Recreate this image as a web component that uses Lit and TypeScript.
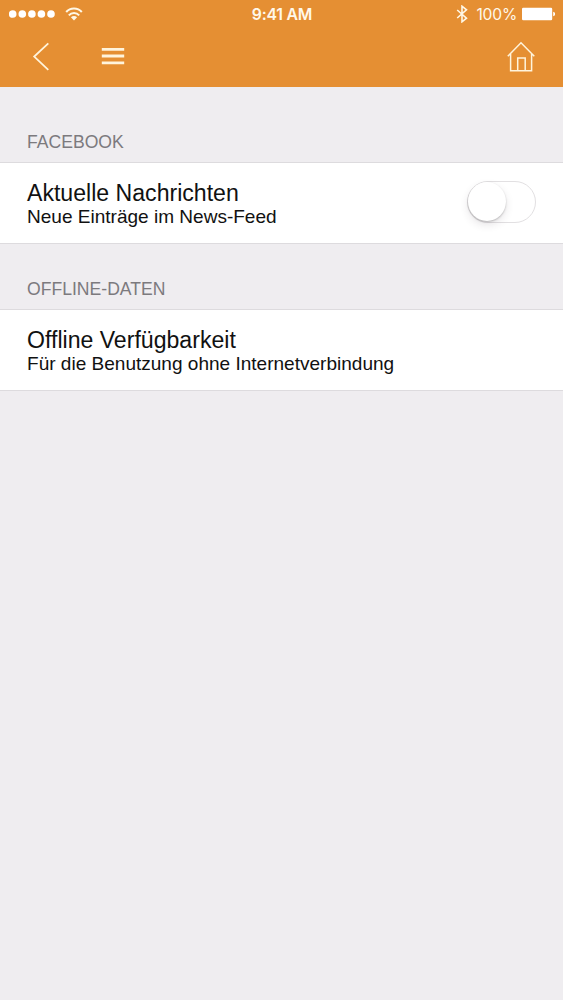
import { LitElement, html, css } from "lit";
import { customElement, property } from "lit/decorators.js";

@customElement("status-bar")
class StatusBar extends LitElement {
  static styles = css`
    :host { display: grid; grid-template-columns: 1fr auto 1fr; align-items: center; height: 28px; padding: 0 8px 0 9px; color: #fff8ea; }
    .side { display: flex; align-items: center; }
    .signal { display: block; margin-right: 10px; }
    .right { justify-content: flex-end; }
    .time { font: 600 15.8px/28px Inter, sans-serif; letter-spacing: -0.22px; padding-top: 1px; }
    .percent { font: 400 15.6px/28px Inter, sans-serif; letter-spacing: -0.2px; margin: 0 4px 0 8px; padding-top: 1px; }
    svg { display: block; flex: none; margin-bottom: 2px; }
  `;
  render() {
    return html`
      <div class="side">
        <svg class="signal" width="46" height="10" viewBox="0 0 46 10" fill="#fff">
          <circle cx="3.7" cy="5" r="3.8"/><circle cx="13.3" cy="5" r="3.8"/><circle cx="22.9" cy="5" r="3.8"/><circle cx="32.4" cy="5" r="3.8"/><circle cx="42" cy="5" r="3.8"/>
        </svg>
        <svg width="18" height="14" viewBox="0 0 18 14" fill="none" stroke="#fff8e6" stroke-width="2">
          <path d="M1.2 5C5.2.2 12.8.2 16.8 5M3.8 8.3c2.8-3.1 7.6-3.1 10.4 0"/>
          <path d="M5.9 10.2c1.7-1.6 4.5-1.6 6.2 0L9 13.4z" fill="#fff8e6" stroke="none"/>
        </svg>
      </div>
      <div class="time">9:41 AM</div>
      <div class="side right">
        <svg width="12" height="18" viewBox="0 0 12 18" fill="none" stroke="#fff8e6" stroke-width="1.6">
          <path d="M1.2 5l9.3 8.2L6 16.8V1.2l4.5 3.6L1.2 13"/>
        </svg>
        <span class="percent">100%</span>
        <svg width="34" height="14" viewBox="0 0 34 14" fill="#fff">
          <rect x="1" y="0.7" width="30.2" height="12.6" rx="1.2"/><path d="M32.2 4.7q2 .5 2 2.3t-2 2.3z"/>
        </svg>
      </div>`;
  }
}

@customElement("nav-bar")
class NavBar extends LitElement {
  static styles = css`
    :host { display: flex; align-items: center; height: 57px; padding: 0 27px 0 32px; box-sizing: border-box; }
    svg { display: block; fill: none; stroke: #fff4dc; }
    .menu { margin-left: 51px; }
    .home { margin-left: auto; }
  `;
  render() {
    return html`
      <svg width="18" height="30" viewBox="0 0 18 30" stroke-width="1.8"><path d="M16.3 1.3L2.2 14.6l14.1 13.2"/></svg>
      <svg class="menu" width="24" height="22" viewBox="0 0 24 22" stroke-width="2.8"><path d="M.8 3.3h22.4M.8 10h22.4M.8 16.8h22.4"/></svg>
      <svg class="home" width="30" height="32" viewBox="0 0 30 32" stroke-width="1.5"><path d="M1.8 15.3L15 1.7l13.3 13.6M4.6 13v16.8h21V13M11.7 29.8V17h7.5v12.8"/></svg>`;
  }
}

@customElement("toggle-switch")
class ToggleSwitch extends LitElement {
  static styles = css`
    :host { display: block; flex: none; width: 69px; height: 42px; margin-top: 1px; box-sizing: border-box; border: 1.5px solid #e2e0e2; border-radius: 21px; background: #fff; }
    .knob { width: 38px; height: 39px; border-radius: 50%; background: #fff; box-shadow: 0 1px 2px rgba(0, 0, 0, 0.22), 0 4px 9px rgba(60, 40, 60, 0.12); }
  `;
  render() {
    return html`<div class="knob"></div>`;
  }
}

@customElement("settings-section")
class SettingsSection extends LitElement {
  @property() heading = "";
  @property() label = "";
  @property() detail = "";
  static styles = css`
    :host { display: block; }
    .heading { box-sizing: border-box; height: 66px; padding: 36px 27px 0; font-size: 17.6px; line-height: 20px; color: #7c7a7e; }
    .row { display: flex; justify-content: space-between; align-items: flex-start; box-sizing: border-box; height: 82px; padding: 17px 27px 0; background: #fff; border: solid #dddbde; border-width: 1px 0; }
    .text { padding-top: 1px; }
    .label { font-size: 23.1px; line-height: 25px; color: #111; }
    .detail { font-size: 19.04px; line-height: 22px; color: #111; }
  `;
  render() {
    return html`
      <div class="heading">${this.heading}</div>
      <div class="row">
        <div class="text">
          <div class="label">${this.label}</div>
          <div class="detail">${this.detail}</div>
        </div>
        <slot></slot>
      </div>`;
  }
}

@customElement("app-root")
class AppRoot extends LitElement {
  static styles = css`
    :host { display: block; height: 1000px; overflow: hidden; background: #efedf0; font-family: "Liberation Sans", Arial, sans-serif; }
    .header { height: 87px; background: #e58f33; }
    .sections { display: flex; flex-direction: column; padding-top: 9px; }
    .second { margin-top: -1px; }
  `;
  render() {
    return html`
      <div class="header"><status-bar></status-bar><nav-bar></nav-bar></div>
      <div class="sections">
        <settings-section heading="FACEBOOK" label="Aktuelle Nachrichten" detail="Neue Einträge im News-Feed"><toggle-switch></toggle-switch></settings-section>
        <settings-section class="second" heading="OFFLINE-DATEN" label="Offline Verfügbarkeit" detail="Für die Benutzung ohne Internetverbindung"></settings-section>
      </div>`;
  }
}
